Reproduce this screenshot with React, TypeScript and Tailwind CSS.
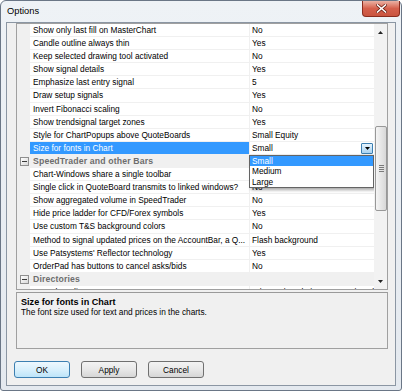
import React from "react";

type R = { label?: string; value?: string; cat?: string; sel?: boolean };

const rows: R[] = [
  { label: "Show only last fill on MasterChart", value: "No" },
  { label: "Candle outline always thin", value: "Yes" },
  { label: "Keep selected drawing tool activated", value: "No" },
  { label: "Show signal details", value: "Yes" },
  { label: "Emphasize last entry signal", value: "5" },
  { label: "Draw setup signals", value: "Yes" },
  { label: "Invert Fibonacci scaling", value: "No" },
  { label: "Show trendsignal target zones", value: "Yes" },
  { label: "Style for ChartPopups above QuoteBoards", value: "Small Equity" },
  { label: "Size for fonts in Chart", value: "Small", sel: true },
  { cat: "SpeedTrader and other Bars" },
  { label: "Chart-Windows share a single toolbar", value: "" },
  { label: "Single click in QuoteBoard transmits to linked windows?", value: "No" },
  { label: "Show aggregated volume in SpeedTrader", value: "No" },
  { label: "Hide price ladder for CFD/Forex symbols", value: "Yes" },
  { label: "Use custom T&S background colors", value: "No" },
  { label: "Method to signal updated prices on the AccountBar, a Q...", value: "Flash background" },
  { label: "Use Patsystems' Reflector technology", value: "Yes" },
  { label: "OrderPad has buttons to cancel asks/bids", value: "No" },
  { cat: "Directories" },
  { label: "User data directory", value: "C:\\Users\\Trader\\Documents\\Tradesignal" },
];

function MinusBox() {
  return (
    <div className="w-[9px] h-[9px] border border-[#8f8f8f] bg-gradient-to-br from-white to-[#d8d8d8] flex items-center justify-center">
      <div className="w-[5px] h-[1px] bg-[#3a3a3a]" />
    </div>
  );
}

function Row({ r }: { r: R }) {
  if (r.cat) {
    return (
      <div className="flex h-[13.1px] shrink-0 bg-[#f0f0f0] items-center">
        <div className="w-[13px] h-full flex items-center pl-[3px]">
          <MinusBox />
        </div>
        <span className="pl-[3px] font-bold text-[8.7px] tracking-[0.15px] leading-[12px] text-[#6d6d6d] whitespace-nowrap">
          {r.cat}
        </span>
      </div>
    );
  }
  return (
    <div className="flex h-[13.1px] shrink-0">
      <div className="w-[13px] h-full bg-[#f0f0f0] shrink-0" />
      <div
        className={
          r.sel
            ? "w-[219px] shrink-0 h-full border-b border-[#f0f0f0] bg-[#3399ff] text-white pl-[3px] leading-[12px] overflow-hidden whitespace-nowrap"
            : "w-[219px] shrink-0 h-full border-b border-[#f0f0f0] bg-white pl-[3px] leading-[12px] overflow-hidden whitespace-nowrap"
        }
      >
        {r.label}
      </div>
      <div className="w-[1px] shrink-0 h-full bg-[#f0f0f0]" />
      <div className="w-[124px] shrink-0 h-full border-b border-[#f0f0f0] bg-white pl-[2px] leading-[12px] overflow-hidden whitespace-nowrap flex">
        <span className="flex-1 overflow-hidden">{r.value}</span>
        {r.sel && (
          <div className="w-[12px] h-[11px] mt-[1px] mr-[1px] border border-[#3c7fb1] rounded-[1px] bg-gradient-to-b from-[#e6f3fc] to-[#a9d3f2] flex items-center justify-center">
            <svg width="5" height="3" viewBox="0 0 5 3">
              <path d="M0 0H5L2.5 3Z" fill="#000" />
            </svg>
          </div>
        )}
      </div>
    </div>
  );
}

function Scrollbar() {
  return (
    <div className="w-[13px] h-full bg-[#f2f2f2] flex flex-col">
      <div className="h-[16px] shrink-0 flex items-center justify-center">
        <svg width="5" height="3" viewBox="0 0 5 3">
          <path d="M0 3H5L2.5 0Z" fill="#222" />
        </svg>
      </div>
      <div className="h-[86px] shrink-0" />
      <div className="h-[85px] shrink-0 ml-[1px] w-[12px] rounded-[2px] border border-[#989898] bg-gradient-to-r from-[#f5f5f5] to-[#d8d8d8] flex flex-col items-center justify-center gap-[1px]">
        <div className="w-[5px] h-[1px] bg-[#7a7a7a]" />
        <div className="w-[5px] h-[1px] bg-[#7a7a7a]" />
        <div className="w-[5px] h-[1px] bg-[#7a7a7a]" />
        <div className="w-[5px] h-[1px] bg-[#7a7a7a]" />
      </div>
      <div className="flex-1" />
      <div className="h-[16px] shrink-0 flex items-center justify-center">
        <svg width="5" height="3" viewBox="0 0 5 3">
          <path d="M0 0H5L2.5 3Z" fill="#222" />
        </svg>
      </div>
    </div>
  );
}

function Btn({ children, primary }: { children: React.ReactNode; primary?: boolean }) {
  return (
    <div
      className={
        primary
          ? "w-[56px] h-[17px] rounded-[3px] border border-[#3c7fb1] bg-gradient-to-b from-[#eef8fe] via-[#d9f0fc] to-[#bde4f8] flex items-center justify-center leading-[12px]"
          : "w-[56px] h-[17px] rounded-[3px] border border-[#707070] bg-gradient-to-b from-[#f3f3f3] via-[#e8e8e8] to-[#d6d6d6] flex items-center justify-center leading-[12px]"
      }
    >
      {children}
    </div>
  );
}

export default function App() {
  return (
    <div className="w-[403px] h-[392px] bg-white font-['Liberation_Sans',Arial,sans-serif] text-[8.3px] text-black">
      <div className="w-[402px] h-[391px] rounded-t-[6px] rounded-b-[3px] border border-[#6a7686] bg-gradient-to-b from-[#eef2f6] to-[#e4e9ef] flex flex-col">
        {/* title bar */}
        <div className="h-[21px] shrink-0 flex">
          <span className="ml-[6px] mt-[4px] text-[9.3px] leading-[12px] text-black">Options</span>
          <div className="ml-auto mr-[1px] w-[38px] h-[16px] rounded-b-[4px] border border-t-0 border-[#8a2c1e] bg-gradient-to-b from-[#eab1a4] via-[#d5604c] to-[#c9543f] flex items-center justify-center">
            <svg width="11" height="9" viewBox="0 0 11 9">
              <path d="M1.5 1L9.5 8M9.5 1L1.5 8" stroke="#6b2014" strokeWidth="3" strokeLinecap="square" />
              <path d="M1.5 1L9.5 8M9.5 1L1.5 8" stroke="#ffffff" strokeWidth="1.6" strokeLinecap="square" />
            </svg>
          </div>
        </div>
        {/* client area */}
        <div className="mx-[5px] h-[364px] shrink-0 border border-[#8b96a3] bg-[#f0f0f0] flex flex-col">
          <div className="ml-[9px] w-[372px] flex flex-col">
            <div className="h-[267px] border border-[#a0a0a0] flex">
              <div className="w-[357px] h-full relative overflow-hidden bg-white flex flex-col">
                {rows.map((r, i) => (
                  <Row key={i} r={r} />
                ))}
                {/* dropdown list */}
                <div className="absolute left-[232px] top-[131px] w-[125px] h-[33px] border border-[#646464] bg-white shadow-[2px_2px_3px_rgba(0,0,0,0.35)] flex flex-col">
                  <div className="h-[10.4px] bg-[#3399ff] text-white pl-[2px] leading-[10px]">Small</div>
                  <div className="h-[10.3px] pl-[2px] leading-[11px]">Medium</div>
                  <div className="h-[10.3px] pl-[2px] leading-[11px]">Large</div>
                </div>
              </div>
              <Scrollbar />
            </div>
            <div className="h-[2px] bg-[#f0f0f0]" />
            <div className="h-[57px] border border-[#a0a0a0] border-t-[#9a9a9a] bg-[#f0f0f0] pl-[4px] pt-[4px] flex flex-col">
              <div className="font-bold text-[9.1px] leading-[10px]">Size for fonts in Chart</div>
              <div className="leading-[10px]">The font size used for text and prices in the charts.</div>
            </div>
          </div>
          <div className="mt-[12px] ml-[7px] flex gap-[11px]">
            <Btn primary>OK</Btn>
            <Btn>Apply</Btn>
            <Btn>Cancel</Btn>
          </div>
        </div>
      </div>
    </div>
  );
}
